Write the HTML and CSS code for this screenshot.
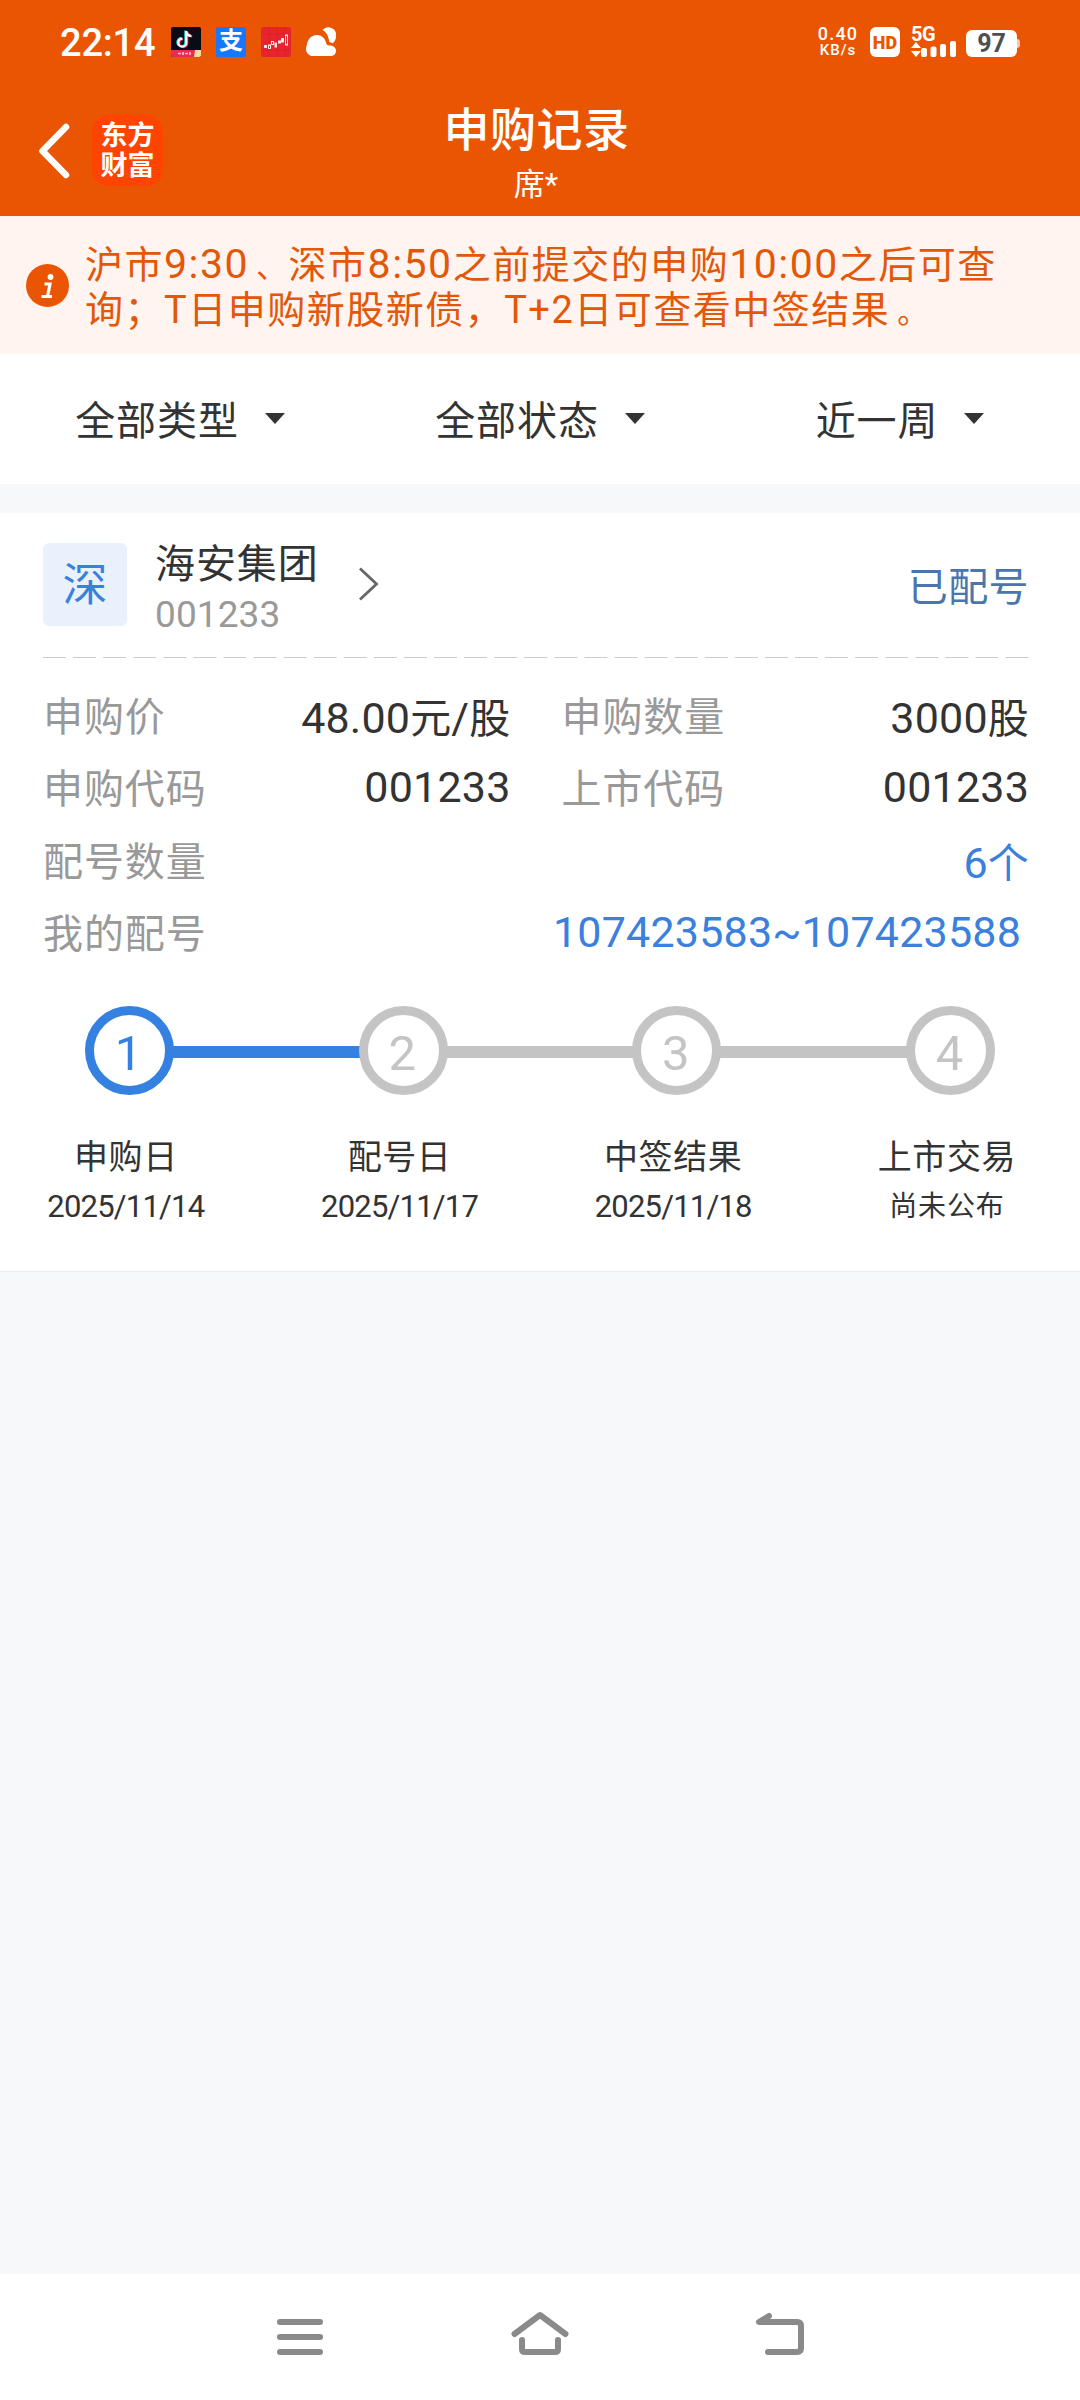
FILE: index.html
```
<!DOCTYPE html>
<html lang="zh-CN">
<head>
    <meta charset="UTF-8">
    <meta name="viewport" content="width=device-width, initial-scale=1.0">
    <title>申购记录</title>
    <link rel="stylesheet" href="styles.css">
</head>
<body>
    <header class="header">
        <div class="status-bar">
            <div class="status-left">
                <span class="clock">22:14</span>
                <svg class="app-icon" viewBox="0 0 30 30">
                    <rect width="30" height="30" rx="2" fill="#0b0b16"/>
                    <g fill="none" stroke-width="2.2">
                        <path d="M14.4 3.500v11.700a4 4 0 1 1-4-4M14.400 4c.4 2.800 2.200 4.200 5 4.500" stroke="#25e5e0"/>
                        <path d="M16.200 4.500v11.700a4 4 0 1 1-4-4M16.200 5c.4 2.800 2.200 4.200 5 4.500" stroke="#fe2c55"/>
                        <path d="M15.300 4v11.700a4 4 0 1 1-4-4M15.300 4.500c.4 2.800 2.200 4.200 5 4.500" stroke="#fff"/>
                    </g>
                    <path d="M0 23h30v5a2 2 0 0 1-2 2H2a2 2 0 0 1-2-2z" fill="#ec2a55"/>
                    <path d="M24 23h6v5a2 2 0 0 1-2 2h-5z" fill="#ffd9a0"/>
                    <path d="M7 26.500h3M12 25v3M14 26.500h3M19 25v3" stroke="#ffc9c9" stroke-width="1.600"/>
                </svg>
                <span class="app-icon alipay">支</span>
                <svg class="app-icon" viewBox="0 0 30 30">
                    <rect width="30" height="30" rx="2" fill="#e8242d"/>
                    <path d="M0 7h30M0 15h30M0 23h30M8 0v30M16 0v30M24 0v30" stroke="#d61f2b" stroke-width=".7"/>
                    <g fill="none" stroke="#ffe4e2" stroke-width="1">
                        <rect x="3.500" y="18.500" width="2" height="2" fill="#fff"/>
                        <rect x="7.500" y="18" width="2" height="3.500"/>
                        <rect x="10.500" y="14.500" width="2" height="3"/>
                        <rect x="14" y="16" width="1.500" height="4" fill="#fff"/>
                        <rect x="17.500" y="14" width="2" height="2"/>
                        <rect x="20.500" y="11.500" width="2" height="3.500" fill="#fff"/>
                        <rect x="24.500" y="8" width="2" height="10"/>
                    </g>
                </svg>
                <svg class="app-icon" viewBox="0 0 30 30" fill="#fff">
                    <path d="M16.500 3a7.700 7.700 0 0 1 13.500 6c0 3.200-1 5.600-3.300 7.200a8 8 0 0 0-3.400-1.200C22.500 9 20.500 5 16.500 3z"/>
                    <path d="M7 29a7 7 0 0 1-6.400-10c.4-2 .6-3 .9-4a9.600 9.600 0 0 1 18.800 1.600c.3 1.300 1.400 1.900 3.200 1.900 4-.3 6.500 2.500 6.500 5.200C30 27 27.500 29 24.500 29z"/>
                </svg>
            </div>
            <div class="status-right">
                <div class="net-speed"><span class="speed-num">0.40</span><span class="speed-unit">KB/s</span></div>
                <span class="hd">HD</span>
                <div class="signal">
                    <span class="signal-type">5G</span>
                    <svg width="46" height="17" viewBox="0 0 46 17" fill="#fff">
                        <path d="M0 8l5-6 5 6zM0 11h10l-5 6z"/>
                        <rect x="10" y="8" width="6" height="9" rx="2"/>
                        <rect x="19.500" y="6.500" width="6" height="10.500" rx="2"/>
                        <rect x="29" y="4" width="6" height="13" rx="2"/>
                        <rect x="39" y="1" width="6" height="16" rx="2"/>
                    </svg>
                </div>
                <div class="battery">97</div>
            </div>
        </div>
        <div class="nav-bar">
            <div class="nav-left">
                <svg class="back" width="32" height="56" viewBox="0 0 32 56">
                    <path d="M28 4L4.500 28 28 52" fill="none" stroke="#fff" stroke-width="6.500" stroke-linecap="round" stroke-linejoin="round"/>
                </svg>
                <div class="logo">东方<br>财富</div>
            </div>
            <div class="nav-title">
                <h1>申购记录</h1>
                <p>席*</p>
            </div>
        </div>
    </header>

    <section class="notice">
        <svg class="info-icon" width="43" height="43" viewBox="0 0 43 43">
            <circle cx="21.500" cy="21.500" r="21.500" fill="#ea5504"/>
            <circle cx="24.500" cy="13" r="2.900" fill="#fff"/>
            <path d="M18.500 20h5.500l-2.500 12.500M15.500 32.500h10.500" fill="none" stroke="#fff" stroke-width="3.200"/>
        </svg>
        <p>沪市<b>9:30</b><i>、</i>深市<b>8:50</b>之前提交的申购<b>10:00</b>之后可查<br>询；T日申购新股新债，T+2日可查看中签结果<i>。</i></p>
    </section>

    <nav class="filters">
        <div class="filter">全部类型<i class="caret"></i></div>
        <div class="filter">全部状态<i class="caret"></i></div>
        <div class="filter">近一周<i class="caret"></i></div>
    </nav>

    <main class="card">
        <div class="stock">
            <span class="market">深</span>
            <div class="stock-name">
                <strong>海安集团</strong>
                <span>001233</span>
            </div>
            <svg class="arrow" width="21" height="34" viewBox="0 0 21 34">
                <path d="M2 1.500L18.500 17 2 32.500" fill="none" stroke="#666" stroke-width="2.800"/>
            </svg>
            <span class="state">已配号</span>
        </div>
        <svg class="divider" width="986" height="1">
            <line x1="0" y1="0.500" x2="986" y2="0.500" stroke="#ccc" stroke-dasharray="23 7.080"/>
        </svg>
        <div class="info">
            <div class="row">
                <div class="cell"><span class="label">申购价</span><span class="value">48.00<b>元</b>/<b>股</b></span></div>
                <div class="cell"><span class="label">申购数量</span><span class="value">3000<b>股</b></span></div>
            </div>
            <div class="row">
                <div class="cell"><span class="label">申购代码</span><span class="value">001233</span></div>
                <div class="cell"><span class="label">上市代码</span><span class="value">001233</span></div>
            </div>
            <div class="row">
                <div class="cell"><span class="label">配号数量</span><span class="value link">6<b>个</b></span></div>
            </div>
            <div class="row">
                <div class="cell"><span class="label">我的配号</span><span class="value link numbers">107423583~107423588</span></div>
            </div>
        </div>
        <div class="track">
            <span class="dot active">1</span>
            <span class="bar active"></span>
            <span class="dot">2</span>
            <span class="bar"></span>
            <span class="dot">3</span>
            <span class="bar"></span>
            <span class="dot">4</span>
        </div>
        <div class="steps">
            <div class="step"><span class="step-name">申购日</span><span class="step-date">2025/11/14</span></div>
            <div class="step"><span class="step-name">配号日</span><span class="step-date">2025/11/17</span></div>
            <div class="step"><span class="step-name">中签结果</span><span class="step-date">2025/11/18</span></div>
            <div class="step"><span class="step-name">上市交易</span><span class="step-date pending">尚未公布</span></div>
        </div>
    </main>

    <footer class="system-nav">
        <svg width="60" height="50" viewBox="0 0 60 50">
            <path d="M10 12h40M10 27h40M10 42h40"/>
        </svg>
        <svg width="60" height="50" viewBox="0 0 60 50">
            <path d="M4.500 24L30 5l25.500 19M12 30v9q0 3 3 3h30q3 0 3-3v-9"/>
        </svg>
        <svg width="60" height="50" viewBox="0 0 60 50">
            <path d="M19 6l-10 6h38q4 0 4 4v22q0 4-4 4H18"/>
        </svg>
    </footer>
</body>
</html>
```
FILE: styles.css
```
* {
    box-sizing: border-box;
}

body {
    margin: 0;
    height: 2400px;
    display: flex;
    flex-direction: column;
    background: #f7f8fa;
    color: #333;
    font-family: Roboto, "Noto Sans CJK SC", sans-serif;
}

h1, p {
    margin: 0;
    font-weight: 400;
}

svg {
    display: block;
    flex: none;
}

/* Header */
.header {
    height: 216px;
    background: #ea5504;
    color: #fff;
}

.status-bar {
    height: 84px;
    padding: 0 60px;
    display: flex;
    align-items: center;
    justify-content: space-between;
}

.status-left,
.status-right {
    display: flex;
    align-items: center;
}

.status-left {
    gap: 15px;
}

.clock {
    width: 96px;
    padding-top: 2px;
    font-size: 38px;
    font-weight: 500;
    letter-spacing: -0.2px;
    white-space: nowrap;
}

.app-icon {
    width: 30px;
    height: 30px;
}

.alipay {
    border-radius: 2px;
    background: #1677ff;
    font-size: 24px;
    font-weight: 700;
    line-height: 28px;
    text-align: center;
}

.net-speed {
    width: 40px;
    margin-right: 12px;
    display: flex;
    flex-direction: column;
    align-items: center;
    font-weight: 500;
}

.speed-num {
    font-size: 18px;
    line-height: 17px;
    letter-spacing: 1.2px;
}

.speed-unit {
    font-size: 15px;
    line-height: 17px;
    letter-spacing: 1px;
}

.hd {
    width: 30px;
    height: 30px;
    border-radius: 6px;
    background: #fff;
    color: #ea5504;
    font-size: 18px;
    font-weight: 900;
    line-height: 31px;
    text-align: center;
}

.signal {
    width: 46px;
    height: 30px;
    margin: 0 9px 0 11px;
}

.signal-type {
    display: block;
    height: 13px;
    font-size: 20px;
    font-weight: 700;
    line-height: 15px;
    letter-spacing: -0.5px;
}

.battery {
    position: relative;
    width: 51px;
    height: 27px;
    margin: 3px 3px 0 0;
    border-radius: 6px;
    background: #fff;
    color: #4d5053;
    font-size: 25px;
    font-weight: 700;
    line-height: 28px;
    text-align: center;
}

.battery::after {
    content: "";
    position: absolute;
    top: 9px;
    right: -3px;
    width: 3px;
    height: 9px;
    border-radius: 0 3px 3px 0;
    background: #f8c8ac;
}

.nav-bar {
    height: 132px;
    display: grid;
    grid-template-columns: 1fr 200px 1fr;
}

.nav-left {
    padding: 31px 0 0 38px;
    display: flex;
    align-items: flex-start;
    gap: 22px;
}

.back {
    margin-top: 8px;
}

.logo {
    width: 71px;
    height: 71px;
    padding-top: 6px;
    border-radius: 16px;
    background: #ff4400;
    font-size: 27px;
    font-weight: 700;
    line-height: 30px;
    text-align: center;
}

.nav-title {
    padding-top: 19px;
    margin-left: -7px;
    text-align: center;
}

.nav-title h1 {
    font-size: 46px;
    font-weight: 500;
    line-height: 54px;
    letter-spacing: 0.5px;
    white-space: nowrap;
}

.nav-title p {
    margin: 8px 1px 0 0;
    font-size: 31px;
    line-height: 40px;
}

/* Notice */
.notice {
    height: 138px;
    padding: 5px 26px 0;
    display: flex;
    align-items: center;
    gap: 16px;
    background: #fff4f0;
    color: #e25708;
    font-size: 38px;
    line-height: 44px;
    letter-spacing: 1.5px;
    white-space: nowrap;
}

.info-icon {
    margin-bottom: 5px;
}

.notice b {
    font-size: 41px;
    font-weight: 400;
    line-height: 40px;
}

.notice i {
    margin-left: 7px;
    font-size: 31px;
    font-style: normal;
    line-height: 40px;
}

/* Filters */
.filters {
    height: 130px;
    margin-bottom: 29px;
    padding-bottom: 2px;
    display: grid;
    grid-template-columns: repeat(3, 1fr);
    background: #fff;
}

.filter {
    display: flex;
    align-items: center;
    justify-content: center;
    font-size: 40px;
    letter-spacing: 0.9px;
}

.caret {
    margin-left: 26px;
    border: 10px solid transparent;
    border-top: 11px solid #333;
    border-bottom: 0;
}

/* Subscription card */
.card {
    height: 759px;
    padding: 0 51px 0 43px;
    border-bottom: 1px solid #ebebeb;
    background: #fff;
}

.stock {
    height: 144px;
    padding-top: 30px;
    display: flex;
    align-items: flex-start;
}

.market {
    width: 84px;
    height: 83px;
    border-radius: 6px;
    background: #e9f2fc;
    color: #3a80dc;
    font-size: 45px;
    line-height: 85px;
    text-align: center;
}

.stock-name {
    width: 203px;
    margin-left: 28px;
    padding-top: 2px;
    display: flex;
    flex-direction: column;
}

.stock-name strong {
    font-size: 40px;
    font-weight: 400;
    line-height: 40px;
    letter-spacing: 0.9px;
}

.stock-name span {
    margin-top: 10px;
    color: #999;
    font-size: 37px;
    line-height: 40px;
    letter-spacing: 0.1px;
}

.arrow {
    margin-top: 24px;
}

.state {
    margin: 25px 0 0 auto;
    color: #4a76ad;
    font-size: 40px;
    line-height: 40px;
    letter-spacing: 0.4px;
}

.info {
    padding-top: 21px;
}

.row {
    height: 72.5px;
    display: flex;
    gap: 52px;
}

.cell {
    flex: 1;
    display: flex;
    align-items: center;
    justify-content: space-between;
}

.cell + .cell {
    margin-left: -1px;
}

.label {
    margin-top: -3px;
    color: #999;
    font-size: 40px;
    letter-spacing: 0.9px;
}

.value {
    margin-top: -1px;
    font-size: 43px;
    letter-spacing: 0.2px;
}

.value b {
    font-size: 41px;
    font-weight: 400;
}

.link {
    color: #3a80dc;
}

.numbers {
    margin-right: 8px;
}

/* Progress */
.track {
    height: 89px;
    margin: 37px 34px 0 42px;
    display: flex;
    align-items: center;
}

.dot {
    width: 89px;
    height: 89px;
    padding-right: 2px;
    border: 9px solid #c4c4c4;
    border-radius: 50%;
    color: #c4c4c4;
    font-size: 49px;
    line-height: 77px;
    text-align: center;
}

.dot.active {
    border-color: #3481e2;
    color: #3481e2;
}

.bar {
    flex: 1;
    height: 12px;
    margin: 3px -1px 0;
    background: #c4c4c4;
}

.bar.active {
    background: #3481e2;
}

.steps {
    margin: 39px -54px 0;
    display: grid;
    grid-template-columns: repeat(4, 273.7px);
}

.step {
    display: flex;
    flex-direction: column;
    align-items: center;
}

.step-name {
    font-size: 34px;
    line-height: 46px;
    letter-spacing: 0.6px;
}

.step-date {
    margin-top: 4px;
    font-size: 31px;
    line-height: 46px;
    letter-spacing: -0.8px;
}

.pending {
    font-size: 28px;
    letter-spacing: 0.8px;
}

/* System navigation */
.system-nav {
    height: 126px;
    margin-top: auto;
    padding: 36px 270px 0;
    display: flex;
    justify-content: space-between;
    background: #fff;
}

.system-nav path {
    fill: none;
    stroke: #8a8a8a;
    stroke-width: 6;
    stroke-linecap: round;
    stroke-linejoin: round;
}
```
